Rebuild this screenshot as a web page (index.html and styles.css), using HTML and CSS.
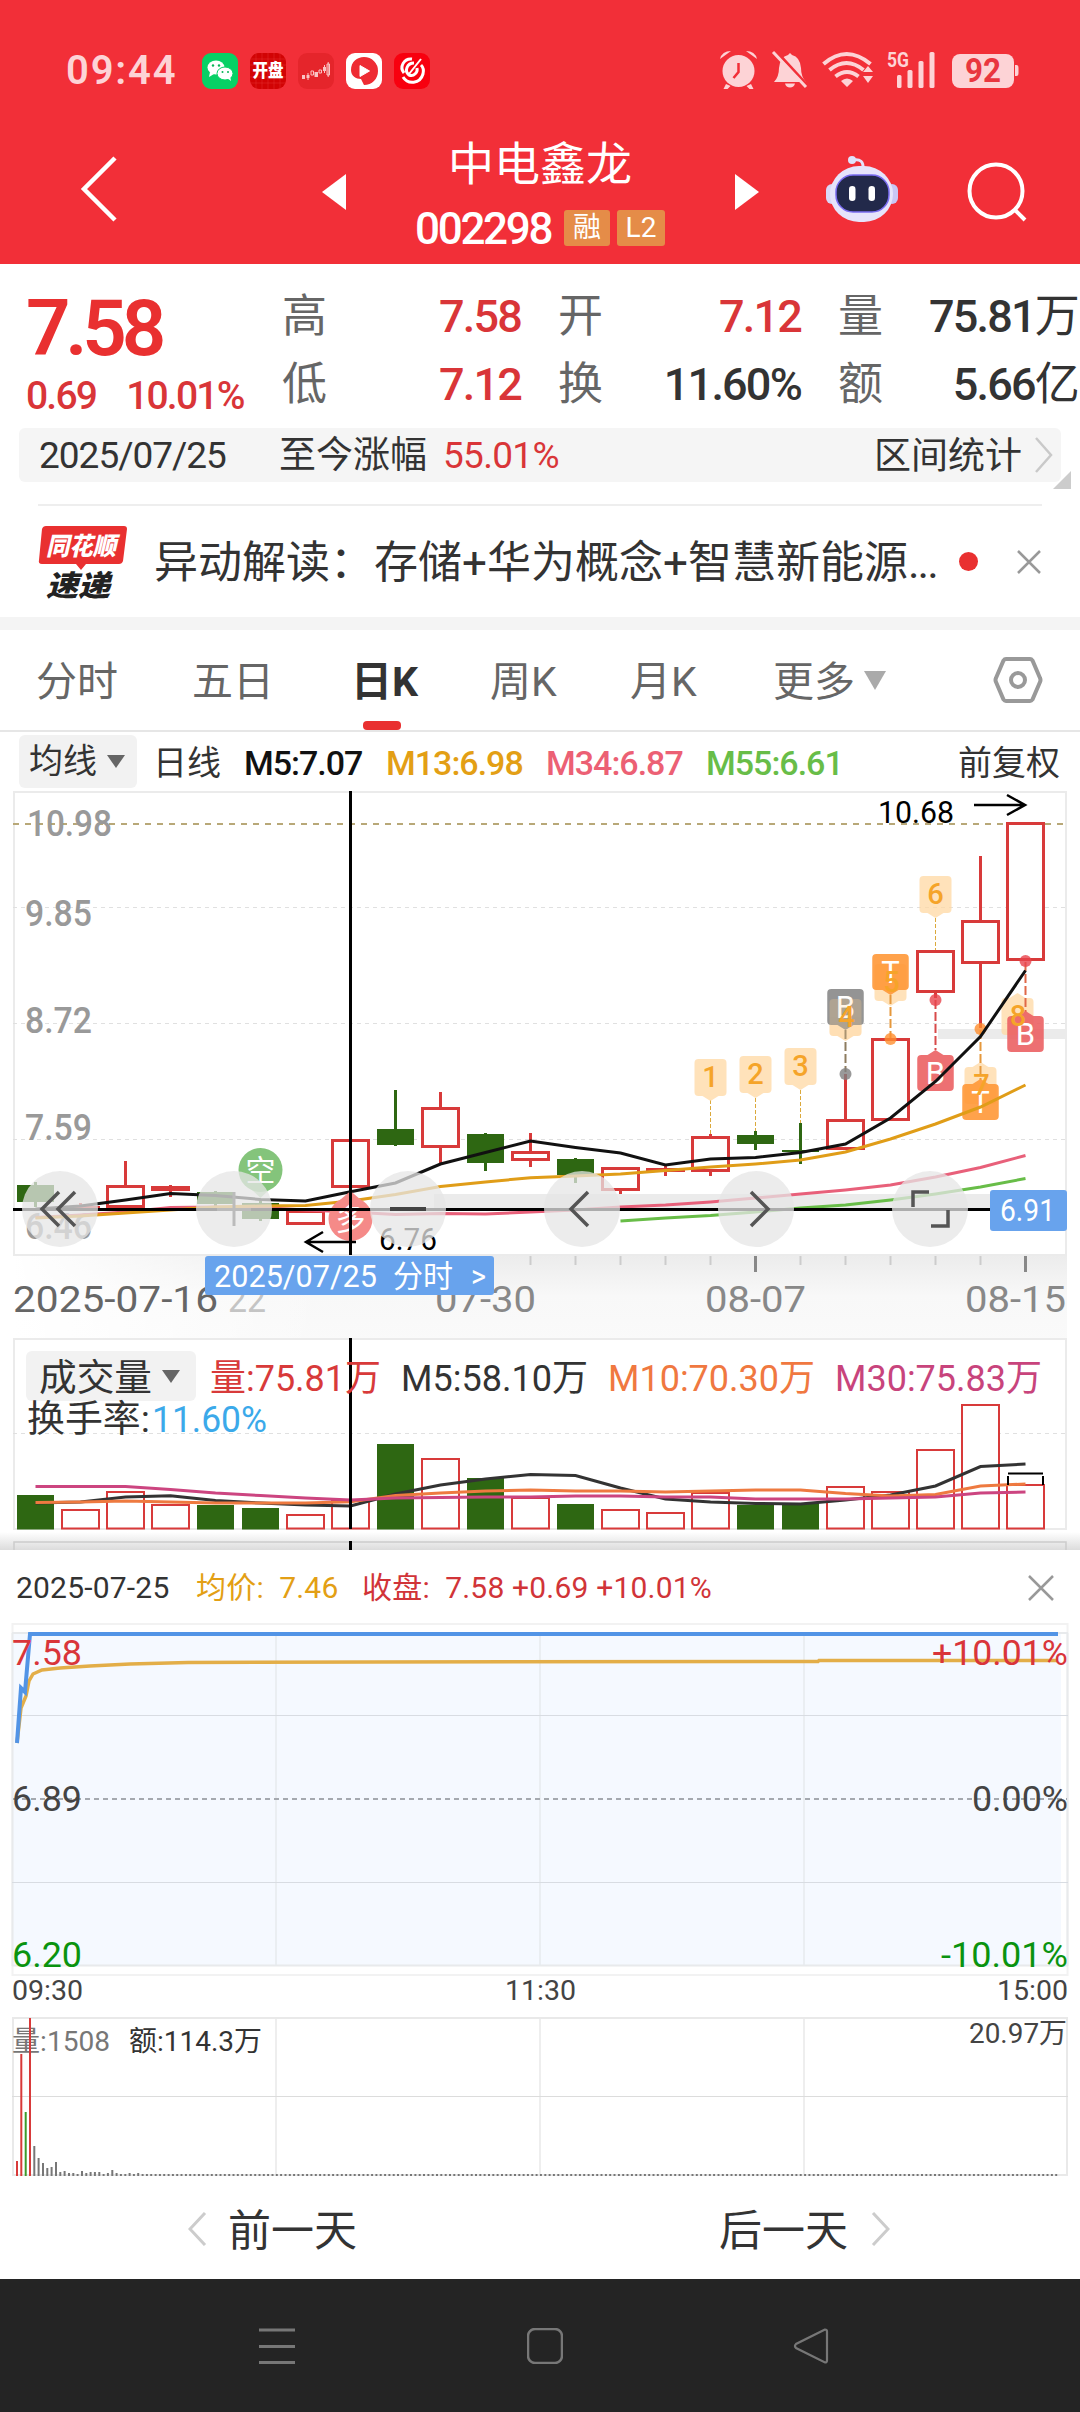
FILE: index.html
```
<!DOCTYPE html>
<html lang="zh-CN">
<head>
    <meta charset="UTF-8">
    <meta name="viewport" content="width=device-width, initial-scale=1.0">
    <title>中电鑫龙 002298</title>
    <link rel="stylesheet" href="styles.css">
</head>
<body>

<header class="top">
    <div class="status">
        <span class="clock">09:44</span>
        <div class="apps">
            <svg width="36" height="36" viewBox="0 0 36 36"><rect width="36" height="36" rx="9" fill="#07d165"/><ellipse cx="14" cy="14.500" rx="8.500" ry="7" fill="#fff"/><path d="M8 19l-1 5 5-3z" fill="#fff"/><ellipse cx="23" cy="20.500" rx="8" ry="6.500" fill="#fff" stroke="#07d165"/><path d="M25 25l4 3-1-5z" fill="#fff"/><g fill="#07b556"><circle cx="11" cy="12.500" r="1.200"/><circle cx="17" cy="12.500" r="1.200"/><circle cx="20.500" cy="19" r="1"/><circle cx="26" cy="19" r="1"/></g></svg>
            <svg width="36" height="36" viewBox="0 0 36 36"><rect width="36" height="36" rx="9" fill="#d20304"/><path d="M6 0v36M12 0v36M18 0v36M24 0v36M30 0v36M0 6h36M0 12h36M0 24h36M0 30h36" stroke="#e8383a" stroke-width=".4"/><text x="18" y="24" class="app-text" textLength="31" lengthAdjust="spacingAndGlyphs">开盘</text></svg>
            <svg width="36" height="36" viewBox="0 0 36 36"><rect width="36" height="36" rx="9" fill="#e5252b"/><g fill="#f9c4c4"><rect x="4" y="22" width="3" height="4"/><rect x="8.500" y="22" width="3" height="3"/><rect x="16.500" y="19" width="3.500" height="5"/><rect x="25" y="14" width="3" height="4"/></g><path d="M13 18h2.500v4H13zM21 17h2.500v3H21zM29 11h2.500v11H29zM30.200 9v15M10 20v7M26.500 12v8" fill="none" stroke="#f9c4c4"/></svg>
            <svg width="36" height="36" viewBox="0 0 36 36"><rect width="36" height="36" rx="9" fill="#fff"/><path d="M18 4a14 13.500 0 0 1 14 14c0 8-6 14-14 14l-3-6c-5 0-10-3-10-9C5 9 11 4 18 4z" fill="#ee2b33"/><path d="M14 12.500v11l9.500-5.500z" fill="#fff" stroke="#fff" stroke-linejoin="round"/></svg>
            <svg width="36" height="36" viewBox="0 0 36 36"><rect width="36" height="36" rx="9" fill="#f8000f"/><path d="M18 6C10 5 5 14 10 20M9 24c5 8 17 7 20-3 1-4 0-7-2-9M20 10c-7 0-10 8-5 12 5 2 9-3 8-7" fill="none" stroke="#fff" stroke-width="3"/><path d="M27 6L15 21" stroke="#fff" stroke-width="2"/></svg>
        </div>
        <svg class="status-icons" width="300" height="42" viewBox="719 49 300 42">
            <g fill="#fdd3d6">
                <circle cx="738.500" cy="71" r="16"/><path d="M726 84l-2.500 5h4l3-3zM751 84l2.500 5h-4l-3-3z"/>
                <path d="M720 59q2-8 11-8zM757 59q-2-8-11-8z"/>
                <path d="M774 82q5-5 5-14 1-11 9-13l2-2 2 2q8 2 9 13 0 9 5 14zM785 83.500h10q-1 4-5 4t-5-4z"/>
                <path d="M847 87l-6-6q6-5 12 0zM863 72h10l-5-6zM863 76h10l-5 7z"/>
                <rect x="897" y="75" width="4.500" height="13" rx="1.500"/><rect x="907.500" y="70" width="5" height="18" rx="1.500"/><rect x="918.500" y="61" width="5" height="27" rx="1.500"/><rect x="929.500" y="52" width="5" height="36" rx="1.500"/>
                <rect x="952" y="54" width="62" height="34" rx="8"/><path d="M1015 65h1.500q2 0 2 3v5q0 3-2 3h-1.500z"/>
                <text x="887" y="67" textLength="22" lengthAdjust="spacingAndGlyphs" class="five-g">5G</text>
            </g>
            <path d="M738.500 63v9l-5 6" fill="none" stroke="#f22f38" stroke-width="2.500"/>
            <path d="M775 50l33 36" stroke="#f22f38" stroke-width="3"/>
            <path d="M773 52l33 35" stroke="#fdd3d6" stroke-width="3"/>
            <path d="M823.500 64q23-20 47 0M829.500 70q17-14 34 0M835.500 76.500q11.500-9 23 0" fill="none" stroke="#fdd3d6" stroke-width="4"/>
            <text x="965" y="82" textLength="36" lengthAdjust="spacingAndGlyphs" class="battery">92</text>
        </svg>
    </div>
    <div class="titlebar">
        <svg class="back" width="40" height="68" viewBox="0 0 40 68"><path d="M36 3L5 34l31 31" fill="none" stroke="#fff" stroke-width="4.500"/></svg>
        <svg class="prev" width="24" height="36" viewBox="0 0 24 36"><path d="M24 0v36L0 18z" fill="#fff"/></svg>
        <div class="stock">
            <div class="stock-name">中电鑫龙</div>
            <div class="stock-code"><span class="code">002298</span><span class="badge">融</span><span class="badge badge-l2">L2</span></div>
        </div>
        <svg class="next" width="24" height="36" viewBox="0 0 24 36"><path d="M0 0v36l24-18z" fill="#fff"/></svg>
        <svg class="robot" width="72" height="68" viewBox="0 0 72 68">
            <path d="M27 5q11-2 10 9" fill="none" stroke="#e4e2fb" stroke-width="3"/><circle cx="26" cy="5" r="4" fill="#dfe2fb"/>
            <rect x="0" y="29" width="12" height="20" rx="6" fill="#d9d8f8"/><rect x="60" y="29" width="12" height="20" rx="6" fill="#c9c6f5"/>
            <rect x="4" y="11" width="63" height="56" rx="29" fill="#e6e4fb"/>
            <rect x="10" y="20" width="53" height="37" rx="17" fill="#22294a" stroke="#7a6cf0" stroke-width="1.500"/>
            <rect x="23" y="31" width="6.500" height="15" rx="3.200" fill="#fff"/><rect x="42.500" y="31" width="6.500" height="15" rx="3.200" fill="#fff"/>
        </svg>
        <svg class="search" width="60" height="60" viewBox="0 0 60 60"><circle cx="29" cy="29" r="26.500" fill="none" stroke="#fff" stroke-width="4"/><path d="M47 47l11 11" stroke="#fff" stroke-width="4"/></svg>
    </div>
</header>

<section class="quote">
    <div class="quote-main">
        <div class="last">
            <div class="price">7.58</div>
            <div class="change"><span>0.69</span><span>10.01%</span></div>
        </div>
        <div class="stats">
            <span class="k">高</span><span class="v red">7.58</span>
            <span class="k">开</span><span class="v red">7.12</span>
            <span class="k">量</span><span class="v">75.81<b>万</b></span>
            <span class="k">低</span><span class="v red">7.12</span>
            <span class="k">换</span><span class="v">11.60%</span>
            <span class="k">额</span><span class="v">5.66<b>亿</b></span>
        </div>
    </div>
    <div class="since">
        <span class="since-date">2025/07/25</span>
        <span class="since-label">至今涨幅</span>
        <span class="since-val red">55.01%</span>
        <span class="since-link">区间统计</span>
        <svg width="20" height="36" viewBox="0 0 20 36"><path d="M2 1l15 17L2 35" fill="none" stroke="#c9c9c9" stroke-width="2.500"/></svg>
        <i class="corner"></i>
    </div>
    <div class="news">
        <svg class="news-logo" width="90" height="76" viewBox="0 0 90 76">
            <path d="M8 0h78q3 0 3 3l-4 32q-1 3-4 3H48l-5 6-5-6H4q-4 0-3-4L4 3q1-3 4-3z" fill="#e93030"/>
            <text x="43" y="29" class="logo-top" textLength="70" lengthAdjust="spacingAndGlyphs">同花顺</text>
            <text x="40" y="70" class="logo-bottom" textLength="64" lengthAdjust="spacingAndGlyphs">速递</text>
        </svg>
        <span class="news-text">异动解读：存储+华为概念+智慧新能源<span class="dots">...</span></span>
        <i class="dot"></i>
        <svg width="26" height="26" viewBox="0 0 26 26"><path d="M2 2l22 22M24 2L2 24" stroke="#999" stroke-width="2.500"/></svg>
    </div>
</section>

<nav class="tabs">
    <span class="tab t1">分时</span>
    <span class="tab t2">五日</span>
    <span class="tab t3 active">日K</span>
    <span class="tab t4">周K</span>
    <span class="tab t5">月K</span>
    <span class="tab t6">更多</span>
    <svg class="more" width="22" height="19" viewBox="0 0 22 19"><path d="M0 0h22L11 19z" fill="#aaa"/></svg>
    <svg class="gear" width="50" height="48" viewBox="0 0 50 48"><path d="M13 3h24q1.500 0 2.500 1.500L47 22q1 2 0 4l-7.500 17.500Q38.500 45 37 45H13q-1.500 0-2.500-1.500L3 26q-1-2 0-4l7.500-17.500Q11.500 3 13 3z" fill="none" stroke="#999" stroke-width="4"/><circle cx="25" cy="24" r="7" fill="none" stroke="#999" stroke-width="4"/></svg>
</nav>

<div class="ma-row">
    <span class="pick">均线<i class="caret"></i></span>
    <span class="ma ma-day">日线</span>
    <span class="ma ma5">M5:7.07</span>
    <span class="ma ma13">M13:6.98</span>
    <span class="ma ma34">M34:6.87</span>
    <span class="ma ma55">M55:6.61</span>
    <span class="adjust">前复权</span>
</div>

<svg class="chart" width="1080" height="760" viewBox="0 790 1080 760">
    <defs>
        <linearGradient id="axisShade" x1="0" y1="0" x2="0" y2="1"><stop offset="0" stop-color="#ececec"/><stop offset=".45" stop-color="#f8f8f8"/><stop offset="1" stop-color="#fafafa"/></linearGradient>
        <linearGradient id="axisFade" x1="0" y1="0" x2="1" y2="0"><stop offset="0" stop-color="#fff"/><stop offset="1" stop-color="#fff" stop-opacity="0"/></linearGradient>
        <linearGradient id="sheetShade" x1="0" y1="0" x2="0" y2="1"><stop offset="0" stop-color="#fff"/><stop offset="1" stop-color="#dcdcdc"/></linearGradient>
    </defs>

    <rect x="13" y="1256" width="1054" height="89" fill="url(#axisShade)"/>
    <rect x="13" y="1256" width="320" height="89" fill="url(#axisFade)"/>
    <g fill="none" stroke="#ebebeb" stroke-width="2">
        <rect x="14" y="792" width="1052" height="463"/>
        <rect x="14" y="1339" width="1052" height="190" fill="#fff"/>
    </g>
    <path d="M13 824H1066" stroke="#b8a878" stroke-width="2" stroke-dasharray="6 6"/>
    <path d="M13 907.500H1066M13 1023.500H1066M13 1139.500H1066M13 1433.500H1066" stroke="#e0e0e0" stroke-dasharray="4 4"/>
    <rect x="434" y="1194" width="633" height="16" fill="#ebebeb"/>
    <rect x="938" y="1029" width="129" height="10" fill="#ebebeb"/>

    <g class="scale">
        <text x="27" y="836" textLength="85">10.98</text>
        <text x="25" y="926" textLength="67">9.85</text>
        <text x="25" y="1033" textLength="67">8.72</text>
        <text x="25" y="1140" textLength="67">7.59</text>
        <text x="25" y="1239" textLength="67">6.46</text>
    </g>

    <g id="candles"></g>
    <g id="marks"></g>
    <g id="lines"></g>

    <!-- long / short signals -->
    <path d="M250 1188l10.500 10 10.500-10z" fill="#b9dcb4"/>
    <circle cx="260.500" cy="1170" r="22" fill="#84c47b"/>
    <text x="260.500" y="1181" class="signal">空</text>
    <path d="M340 1200l10.500-9 10.500 9z" fill="#f58a88"/>
    <circle cx="350.500" cy="1219" r="22" fill="#f58a88"/>
    <text x="350.500" y="1230" class="signal">多</text>

    <g class="peak">
        <text x="878" y="823" textLength="76">10.68</text>
        <text x="379" y="1250" textLength="58">6.76</text>
    </g>
    <path d="M974 805h50M1007 795l18 10-18 10M356 1242h-50M323 1232l-17 10 17 10" fill="none" stroke="#000" stroke-width="2.500"/>

    <path d="M350.500 791V1255M350.500 1338V1529M350.500 1541V1550" stroke="#000" stroke-width="3"/>
    <path d="M13 1209.500H990" stroke="#000" stroke-width="3"/>

    <g id="buttons"></g>
    <g fill="none" stroke="#555" stroke-width="3.500">
        <path d="M59 1192l-17 17 17 17M75 1192l-17 17 17 17M588 1192l-17 17 17 17M751 1192l17 17-17 17"/>
        <path d="M913 1207v-15h16M948 1210v16h-17"/>
    </g>
    <path d="M217 1209.500h34M234 1192v34" stroke="#bbb" stroke-width="3"/>
    <path d="M390 1209h36" stroke="#444" stroke-width="4"/>

    <rect x="990" y="1190" width="77" height="41" rx="3" fill="#68a3ed"/>
    <text x="1000" y="1221" class="tip" textLength="55">6.91</text>

    <g id="ticks"></g>
    <g class="axis">
        <text x="228" y="1312" fill="#c4c4c4" textLength="38">22</text>
        <text x="435" y="1312" textLength="101">07-30</text>
        <text x="705" y="1312" textLength="101">08-07</text>
        <text x="965" y="1312" textLength="101">08-15</text>
        <text x="13" y="1312" fill="#666" textLength="205">2025-07-16</text>
    </g>
    <rect x="205" y="1256" width="289" height="39" rx="3" fill="#68a3ed"/>
    <text x="214" y="1287" class="tip" textLength="163">2025/07/25</text>
    <text x="393" y="1287" class="tip" textLength="60">分时</text>
    <text x="471" y="1287" class="tip" textLength="15">&gt;</text>

    <g id="volume"></g>
    <g id="volumeLines"></g>
    <path d="M1008 1473.500h35M1008 1476v9M1043 1476v9" fill="none" stroke="#000" stroke-width="2"/>
    <rect x="26" y="1351" width="170" height="50" rx="6" fill="#f2f2f2"/>
    <path d="M162 1370h18l-9 13z" fill="#666"/>
    <path d="M350.500 1338V1529" stroke="#000" stroke-width="3"/>
    <g class="vol-text">
        <text x="39" y="1391" textLength="113">成交量</text>
        <text x="210" y="1391" textLength="171" fill="#d83a3a">量:75.81万</text>
        <text x="401" y="1391" textLength="187">M5:58.10万</text>
        <text x="608" y="1391" textLength="207" fill="#f07840">M10:70.30万</text>
        <text x="835" y="1391" textLength="207" fill="#c8447c">M30:75.83万</text>
        <text x="27" y="1432" textLength="123">换手率:</text>
        <text x="152" y="1432" textLength="115" fill="#3ba9ea">11.60%</text>
    </g>

    <rect x="0" y="1532" width="1080" height="18" fill="url(#sheetShade)"/>
    <path d="M14 1550v-8h1052v8" fill="none" stroke="#ccc" stroke-width="1.500"/>
    <path d="M350.500 1541V1550" stroke="#000" stroke-width="3"/>
</svg>

<section class="sheet">
    <div class="sheet-head">
        <span class="sheet-date">2025-07-25</span>
        <span class="sheet-avg">均价:&nbsp; 7.46</span>
        <span class="sheet-close">收盘:&nbsp; 7.58 +0.69 +10.01%</span>
        <svg width="28" height="28" viewBox="0 0 28 28"><path d="M2 2l24 24M26 2L2 26" stroke="#999" stroke-width="2.500"/></svg>
    </div>
    <svg class="intraday" width="1080" height="570" viewBox="0 1614 1080 570">
        <rect x="12.500" y="1624" width="1055" height="351" fill="none" stroke="#f2f2f2" stroke-width="2"/>
        <rect x="13" y="1634" width="1048" height="331" fill="#f5f9ff"/>
        <path d="M12.500 1633V1966M1067.500 1633V1966M12 1633H1068M12 1965.500H1068" stroke="#e8eaec" stroke-width="2"/>
        <path d="M276 1634V1965M540 1634V1965M804 1634V1965" stroke="#e6eaee" stroke-width="1.500"/>
        <path d="M12 1715.500H1068M12 1882.500H1068" stroke="#d8dce2"/>
        <path d="M13 1799H1067" stroke="#a5a9af" stroke-width="2" stroke-dasharray="5 4"/>
        <path d="M17 1743L21 1708L26 1696L29 1681L33 1674L42 1670L60 1668L90 1666L130 1664L188 1662.500L375 1662L818 1661.500L819 1660.500H1058" fill="none" stroke="#e3ae48" stroke-width="3.500"/>
        <path d="M17 1743L21 1688L25 1692L30 1634H1058" fill="none" stroke="#5294e6" stroke-width="4"/>
        <g class="pct">
            <text x="12" y="1665" fill="#d9353a" textLength="70">7.58</text>
            <text x="12" y="1811" textLength="70">6.89</text>
            <text x="12" y="1967" fill="#0a930f" textLength="70">6.20</text>
            <text x="932" y="1665" fill="#d9353a" textLength="136">+10.01%</text>
            <text x="972" y="1811" textLength="96">0.00%</text>
            <text x="941" y="1967" fill="#0a930f" textLength="127">-10.01%</text>
        </g>
        <g class="time">
            <text x="12" y="2000" textLength="71">09:30</text>
            <text x="505" y="2000" textLength="71">11:30</text>
            <text x="997" y="2000" textLength="71">15:00</text>
        </g>
        <g fill="none" stroke="#e9e9e9" stroke-width="2">
            <rect x="13" y="2018" width="1054" height="157"/>
            <path d="M276 2018V2175M540 2018V2175M804 2018V2175" stroke-width="1.500"/>
        </g>
        <path d="M12 2096.500H1068" stroke="#dcdcdc"/>
        <g class="time">
            <text x="12" y="2051" fill="#777" textLength="98">量:1508</text>
            <text x="129" y="2051" fill="#333" textLength="133">额:114.3万</text>
            <text x="969" y="2043" textLength="98">20.97万</text>
        </g>
        <g id="minutes"></g>
    </svg>
    <div class="days">
        <div class="day"><svg width="20" height="34" viewBox="0 0 20 34"><path d="M17 1L2 17l15 16" fill="none" stroke="#ccc" stroke-width="3"/></svg><span>前一天</span></div>
        <div class="day day-next"><span>后一天</span><svg width="20" height="34" viewBox="0 0 20 34"><path d="M3 1l15 16L3 33" fill="none" stroke="#ccc" stroke-width="3"/></svg></div>
    </div>
</section>

<footer class="sysnav">
    <svg width="36" height="36" viewBox="0 0 36 36"><path d="M0 2h36M0 18.500h36M0 34.500h36" stroke="#777" stroke-width="3"/></svg>
    <svg width="36" height="36" viewBox="0 0 36 36"><rect x="1" y="1" width="34" height="34" rx="7" fill="none" stroke="#777" stroke-width="2.500"/></svg>
    <svg width="36" height="36" viewBox="0 0 36 36"><path d="M32 1.500L3 16q-2 2 0 4l29 14.500q2 0 2-2v-29q0-2-2-2z" fill="none" stroke="#777" stroke-width="2.200"/></svg>
</footer>

<script src="chart.js"></script>
</body>
</html>
```
FILE: styles.css
```
* {
    box-sizing: border-box;
}

body {
    margin: 0;
    width: 1080px;
    height: 2412px;
    overflow: hidden;
    background: #fff;
    color: #333;
    font-family: Roboto, "Noto Sans CJK SC", sans-serif;
}

svg {
    display: block;
    flex: none;
}

i {
    display: block;
}

.red {
    color: #d93538;
}

/* Status bar and title */
.top {
    height: 264px;
    background: #f22f38;
    color: #fff;
}

.status {
    display: flex;
    height: 112px;
    padding: 49px 61px 0 66px;
}

.clock {
    width: 136px;
    font-size: 40px;
    font-weight: 600;
    line-height: 43px;
    letter-spacing: 1.8px;
    color: #fdd3d6;
}

.apps {
    display: flex;
    gap: 12px;
    padding-top: 4px;
}

.status-icons {
    margin-left: auto;
}

.app-text {
    font-size: 18px;
    font-weight: 900;
    fill: #fff;
    text-anchor: middle;
}

.five-g {
    font-size: 21px;
    font-weight: 700;
}

.battery {
    font-size: 33px;
    font-weight: 700;
    fill: #e9363f;
}

.titlebar {
    display: flex;
    height: 152px;
}

.back {
    margin: 43px 0 0 79px;
}

.prev {
    margin: 62px 0 0 203px;
}

.next {
    margin: 62px 0 0 56px;
}

.stock {
    width: 264px;
    margin-left: 69px;
    text-align: center;
}

.stock-name {
    margin: 22px 0 0 -14px;
    font-size: 46px;
    line-height: 60px;
}

.stock-code {
    display: flex;
    align-items: flex-start;
    margin-top: 15px;
}

.code {
    width: 149px;
    font-size: 44px;
    font-weight: 500;
    line-height: 41px;
    letter-spacing: -2.3px;
    text-align: left;
}

.badge {
    width: 46px;
    height: 36px;
    margin-top: 1px;
    border-radius: 3px;
    background: #e58c48;
    font-size: 28px;
    line-height: 36px;
}

.badge-l2 {
    width: 48px;
    margin-left: 7px;
}

.robot {
    margin: 43px 0 0 67px;
}

.search {
    margin: 50px 0 0 69px;
}

/* Quote */
.quote {
    height: 366px;
    border-bottom: 13px solid #f4f4f4;
}

.quote-main {
    display: flex;
    height: 164px;
}

.last {
    width: 282px;
    padding: 28px 0 0 26px;
    color: #e93030;
}

.price {
    font-size: 78px;
    font-weight: 600;
    line-height: 74px;
    letter-spacing: -5.2px;
}

.change {
    display: flex;
    gap: 30px;
    padding-top: 10px;
    color: #d93538;
    font-size: 39px;
    font-weight: 500;
    line-height: 40px;
    letter-spacing: -1.8px;
}

.stats {
    display: grid;
    grid-template-columns: 43px 196px 82px 198px 82px 195px;
    grid-auto-rows: 68px;
    padding-top: 19px;
    font-size: 45px;
    line-height: 68px;
}

.k {
    color: #666;
    text-align: right;
}

.v {
    font-weight: 500;
    letter-spacing: -1.8px;
    text-align: right;
    white-space: nowrap;
}

.v b {
    font-weight: 400;
}

.since {
    position: relative;
    display: flex;
    align-items: center;
    height: 54px;
    margin: 0 19px;
    padding: 0 7px 0 20px;
    border-radius: 6px;
    background: #f5f5f5;
    font-size: 37px;
    line-height: 54px;
}

.since span {
    padding-top: 2px;
}

.since-date {
    width: 240px;
    letter-spacing: -1px;
}

.since-label {
    width: 164px;
}

.since-val {
    letter-spacing: -.7px;
}

.since .since-link {
    margin-left: auto;
    padding: 3px 12px 0 0;
}

.corner {
    position: absolute;
    right: -10px;
    bottom: -7px;
    border: solid transparent;
    border-width: 0 0 18px 18px;
    border-bottom-color: #ccc;
}

.news {
    display: flex;
    align-items: center;
    height: 113px;
    margin: 22px 38px 0;
    border-top: 2px solid #eee;
}

.news-logo {
    margin-top: 4px;
}

.logo-top {
    font-size: 25px;
    font-weight: 900;
    font-style: italic;
    fill: #fff;
    text-anchor: middle;
}

.logo-bottom {
    font-size: 29px;
    font-weight: 900;
    font-style: italic;
    fill: #222;
    text-anchor: middle;
}

.news-text {
    width: 807px;
    margin-left: 26px;
    padding-top: 2px;
    font-size: 44px;
    line-height: 60px;
    white-space: nowrap;
}

.dots {
    letter-spacing: -2px;
}

.dot {
    width: 19px;
    height: 19px;
    margin-right: 38px;
    border-radius: 50%;
    background: #e93030;
}

/* Period tabs */
.tabs {
    display: flex;
    align-items: center;
    height: 102px;
    padding-left: 36px;
    border-bottom: 2px solid #e6e6e6;
    color: #666;
    font-size: 41px;
    line-height: 96px;
}

.tab {
    flex: none;
    padding-top: 4px;
}

.t1 { width: 156px; }
.t2 { width: 159px; }
.t3 { width: 139px; }
.t4 { width: 140px; }
.t5 { width: 143px; }
.t6 { width: 91px; }

.active {
    position: relative;
    color: #333;
    font-weight: 700;
}

.active::after {
    content: "";
    position: absolute;
    left: 12px;
    bottom: 0;
    width: 38px;
    height: 9px;
    border-radius: 4px;
    background: #e93030;
}

.gear {
    margin-left: 107px;
}

/* Moving averages */
.ma-row {
    display: flex;
    height: 58px;
    padding: 3px 20px 0 19px;
    font-size: 34px;
    line-height: 57px;
    white-space: nowrap;
}

.pick {
    display: flex;
    align-items: center;
    gap: 10px;
    width: 118px;
    height: 53px;
    padding-left: 10px;
    border-radius: 6px;
    background: #f2f2f2;
}

.caret {
    border: 9px solid transparent;
    border-width: 13px 9px 0;
    border-top-color: #666;
}

.ma {
    font-weight: 500;
    letter-spacing: -1px;
}

.ma-day { width: 91px; margin-left: 16px; font-weight: 400; letter-spacing: 0; }
.ma5 { width: 142px; color: #111; }
.ma13 { width: 160px; color: #e39f15; }
.ma34 { width: 160px; color: #ec6074; }
.ma55 { color: #68bd48; }

.adjust {
    margin-left: auto;
}

/* K line chart */
.chart text,
.intraday text {
    font-family: Roboto, "Noto Sans CJK SC", sans-serif;
}

.scale {
    font-size: 37px;
    font-weight: 500;
    fill: #999;
}

.axis {
    font-size: 37px;
    fill: #888;
}

.peak {
    font-size: 31px;
}

.signal {
    font-size: 30px;
    fill: #fff;
    text-anchor: middle;
}

.tip {
    font-size: 31px;
    fill: #fff;
}

.vol-text {
    font-size: 37px;
    fill: #333;
}

.mark-num {
    font-size: 29px;
    font-weight: 500;
    fill: #f5a429;
    text-anchor: middle;
}

.mark-letter {
    font-size: 31px;
    fill: #fff;
    text-anchor: middle;
}

/* Intraday sheet */
.sheet {
    height: 729px;
    background: #fff;
}

.sheet-head {
    display: flex;
    align-items: center;
    height: 64px;
    padding: 12px 25px 0 16px;
    font-size: 30px;
    line-height: 50px;
    letter-spacing: .2px;
    white-space: nowrap;
}

.sheet-date {
    width: 180px;
}

.sheet-avg {
    width: 166px;
    color: #e39f15;
}

.sheet-close {
    color: #d13438;
}

.sheet-head svg {
    margin-left: auto;
}

.pct {
    font-size: 35px;
    fill: #444;
}

.time {
    font-size: 28px;
    fill: #444;
}

.days {
    display: flex;
    height: 90px;
    font-size: 43px;
    line-height: 86px;
}

.day {
    display: flex;
    align-items: center;
    gap: 20px;
    width: 532px;
    padding-left: 188px;
}

.day span {
    padding-top: 4px;
}

.day-next {
    width: 548px;
    gap: 22px;
    padding-left: 187px;
}

/* System navigation */
.sysnav {
    display: flex;
    align-items: center;
    gap: 231px;
    height: 133px;
    padding: 1px 0 0 259px;
    background: #242424;
}

.sysnav svg + svg {
    margin-left: 1px;
}

.sysnav svg:last-child {
    margin-left: -1px;
}
```
FILE: chart.js
```
const RED = "#d83a3a";
const GREEN = "#2e6712";

// y positions: [up, body top, body bottom, wick top, wick bottom]
const candles = [
    [0, 1185, 1202, 1182, 1207],
    [1, 1206, 1210, 1203, 1210],
    [1, 1185, 1208, 1161, 1208],
    [1, 1186, 1191, 1185, 1197],
    [0, 1192, 1204, 1191, 1206],
    [0, 1203, 1219, 1201, 1221],
    [1, 1210, 1225, 1210, 1225],
    [1, 1139, 1188, 1139, 1188],
    [0, 1129, 1145, 1090, 1146],
    [1, 1107, 1148, 1092, 1164],
    [0, 1134, 1163, 1133, 1171],
    [1, 1151, 1161, 1133, 1167],
    [0, 1159, 1175, 1158, 1183],
    [1, 1167, 1191, 1167, 1194],
    [1, 1168, 1172, 1165, 1176],
    [1, 1136, 1172, 1134, 1176],
    [0, 1135, 1144, 1131, 1150],
    [0, 1150, 1152, 1123, 1164],
    [1, 1119, 1150, 1074, 1150],
    [1, 1038, 1121, 1038, 1121],
    [1, 950, 993, 950, 998],
    [1, 920, 964, 856, 1028],
    [1, 822, 961, 822, 961]
];

const volumeTops = [1495, 1509, 1491, 1504, 1505, 1508, 1514, 1500, 1444, 1458, 1478, 1497,
    1504, 1509, 1512, 1492, 1505, 1503, 1486, 1491, 1449, 1404, 1484];

const averages = [
    ["#e8607a", 0, [1217.5, 1215, 1212, 1207.5, 1207, 1207.5, 1210, 1212, 1214.5, 1213.5, 1214, 1212, 1210, 1207, 1205, 1202, 1198, 1194, 1190, 1185, 1177, 1167.5, 1155.5]],
    ["#e09d18", 0, [1218, 1216, 1213, 1210, 1207, 1206, 1205.5, 1201, 1194.5, 1186.5, 1182, 1177.7, 1176, 1174, 1170.5, 1167, 1164, 1160, 1152, 1139, 1124, 1107, 1085]],
    ["#111", 0, [1209, 1206, 1200, 1193.5, 1195.5, 1199.5, 1201, 1191.7, 1183, 1164, 1152.5, 1141, 1147.5, 1153, 1165, 1159, 1157.5, 1152.5, 1144, 1118, 1081.5, 1036.5, 970.5]],
    ["#68bd48", 13, [1221, 1218, 1215.5, 1212, 1208, 1205, 1200, 1194, 1187, 1178.5]]
];

const volumeAverages = [
    ["#333", 0, [1503, 1502, 1497, 1495.7, 1500.5, 1503, 1505, 1506, 1494, 1485, 1479, 1474.5, 1475.5, 1488, 1499, 1502, 1503.5, 1504, 1500, 1495, 1486, 1466.5, 1464]],
    ["#ee7a40", 0, [1502.5, 1502, 1501, 1502, 1503, 1503, 1503, 1501.7, 1495.5, 1493, 1491, 1490, 1491, 1491, 1492, 1491, 1490, 1490, 1493.5, 1496, 1494.5, 1486, 1484]],
    ["#cc4580", 0, [1486.5, 1486.5, 1486.5, 1489.5, 1493, 1495.5, 1498, 1500, 1498, 1497.5, 1497, 1497, 1496, 1496, 1497, 1497, 1499, 1499, 1499, 1498, 1497, 1493, 1492]]
];

const cx = i => 35.5 + 45 * i;

function fill(id, html) {
    document.getElementById(id).innerHTML = html;
}

function bar(x, top, bottom, up, stroke) {
    if (!up) {
        return `<rect x="${x - 18.5}" y="${top}" width="37" height="${bottom - top}" fill="${GREEN}"/>`;
    }
    const h = Math.max(bottom - top - stroke, 1);
    return `<rect x="${x - 19.5 + stroke / 2}" y="${top + stroke / 2}" width="${39 - stroke}" height="${h}" fill="#fff" stroke="${RED}" stroke-width="${stroke}"/>`;
}

fill("candles", candles.map(([up, top, bottom, high, low], i) =>
    `<path d="M${cx(i)} ${high}V${low}" stroke="${up ? RED : GREEN}" stroke-width="3"/>` + bar(cx(i), top, bottom, up, 3)
).join(""));

fill("volume", volumeTops.map((top, i) => bar(cx(i), top, 1529.5, candles[i][0], 2)).join(""));

function polyline([color, start, ys]) {
    const points = ys.map((y, i) => `${cx(i + start)},${y}`).join(" ");
    return `<polyline points="${points}" fill="none" stroke="${color}" stroke-width="3"/>`;
}

fill("lines", averages.map(polyline).join(""));
fill("volumeLines", volumeAverages.map(polyline).join(""));

// speech-bubble markers, dir 1 points down and -1 points up
function bubble(x, top, w, h, color, dir, opacity) {
    const y = dir > 0 ? top + h : top;
    return `<g fill="${color}" opacity="${opacity}"><rect x="${x - w / 2}" y="${top}" width="${w}" height="${h}" rx="4"/><path d="M${x - 8} ${y}L${x} ${y + 5 * dir}L${x + 8} ${y}z"/></g>`;
}

function tag(x, top, dir, opacity = 0.75) {
    return bubble(x, top, 32, 37, "#ffd9a3", dir, opacity);
}

function digit(n, x, y) {
    return `<text x="${x}" y="${y}" class="mark-num">${n}</text>`;
}

function num(n, x, top, dir) {
    return tag(x, top, dir) + digit(n, x, top + 28);
}

function letter(t, x, top, color, dir) {
    return bubble(x, top, 36.5, 36, color, dir, 0.9) + `<text x="${x}" y="${top + 29}" class="mark-letter">${t}</text>`;
}

function dash(x, y1, y2, color, w) {
    return `<path d="M${x} ${y1}V${y2}" stroke="${color}" stroke-width="${w}" stroke-dasharray="${w > 1 ? "9 3" : "4 2"}"/>`;
}

function dot(x, y, color) {
    return `<circle cx="${x}" cy="${y}" r="6" fill="${color}" opacity=".8"/>`;
}

fill("marks",
    dash(cx(15), 1100, 1134, "#dba93c", 1) + num(1, cx(15), 1059, 1) +
    dash(cx(16), 1098, 1131, "#dba93c", 1) + num(2, cx(16), 1056, 1) +
    dash(cx(17), 1090, 1123, "#dba93c", 1) + num(3, cx(17), 1048, 1) +
    tag(cx(18), 999, 1) + dash(cx(18), 1030, 1072, "#8d7c60", 2) + dot(cx(18), 1074, "#808080") +
    letter("B", cx(18), 989, "#888", 1) + tag(cx(18), 999, 1, 0.25) + digit(4, cx(18) + 1, 1027) +
    tag(cx(19), 964, 1) + dash(cx(19), 995, 1038, "#e5983c", 2) + dot(cx(19), 1039, "#ff8f2e") +
    letter("T", cx(19), 954, "#ff9838", 1) + digit(5, cx(19) + 1, 992) +
    dash(cx(20), 918, 950, "#dba93c", 1) + num(6, cx(20), 876, 1) +
    dash(cx(20), 1000, 1050, "#d84a4a", 2) + dot(cx(20), 1000, "#e8444c") + letter("B", cx(20), 1055, "#ec6163", -1) +
    tag(cx(21), 1067, -1) + dash(cx(21), 1030, 1080, "#e5983c", 2) + dot(cx(21), 1029, "#ff8f2e") +
    letter("T", cx(21), 1084, "#ff9838", -1) + digit(7, cx(21) + 1, 1095) +
    tag(1017.5, 998, -1) + dash(cx(22), 962, 1012, "#e06848", 2) + dot(cx(22), 961, "#e8444c") +
    letter("B", cx(22), 1016, "#ec6163", -1) + digit(8, 1018, 1026)
);

fill("buttons", [60, 234, 408, 582, 756, 930].map(x =>
    `<circle cx="${x}" cy="1209" r="38" fill="#e6e6e6" opacity=".75"/>`
).join(""));

let ticks = "";
for (let i = 5; i < 23; i++) {
    const major = i === 10 || i === 16 || i === 22;
    ticks += `<path d="M${cx(i)} 1256V${major ? 1272 : 1265}" stroke="${major ? "#888" : "#ccc"}" stroke-width="${major ? 3 : 2}"/>`;
}
fill("ticks", ticks);

// one bar per minute
const minuteTops = [2161, 2054, 2112, 2018, 2146, 2158, 2163, 2168, 2167, 2162, 2172, 2171, 2173, 2173, 2174,
    2171, 2173, 2172, 2172, 2172, 2174, 2173, 2170, 2173, 2174, 2174, 2173, 2174, 2173];
let minutes = "";
for (let i = 0; i < 241; i++) {
    const color = i === 2 ? "#3d9a2a" : i < 4 ? RED : "#777";
    minutes += `<path d="M${(17 + 4.33 * i).toFixed(1)} ${minuteTops[i] || 2174}V2176" stroke="${color}" stroke-width="2"/>`;
}
fill("minutes", minutes);

document.querySelectorAll(".chart text[textLength], .intraday text[textLength]").forEach(t => {
    t.setAttribute("lengthAdjust", "spacingAndGlyphs");
});
```
